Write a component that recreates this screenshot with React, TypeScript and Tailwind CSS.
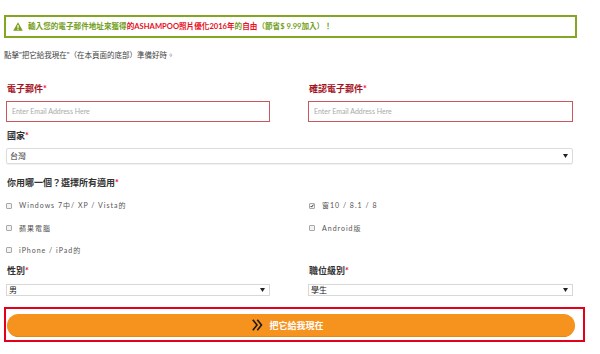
import React from "react";

const font = { fontFamily: 'Lato, "Noto Sans CJK TC", "Noto Sans", sans-serif' };

function Caret() {
  return (
    <svg width="5" height="4" viewBox="0 0 5 4" className="shrink-0">
      <path d="M0 0 L5 0 L2.5 4 Z" fill="#222" />
    </svg>
  );
}

function Box({ checked }: { checked?: boolean }) {
  return (
    <span className="w-[6px] h-[6px] border border-[#a8a8a8] bg-[#f3f3f3] rounded-[1px] flex items-center justify-center shrink-0">
      {checked && (
        <svg width="6" height="6" viewBox="0 0 6 6">
          <path d="M1 3 L2.4 4.6 L5.2 1" stroke="#222" strokeWidth="1.3" fill="none" />
        </svg>
      )}
    </span>
  );
}

function Check({ label, checked, h }: { label: string; checked?: boolean; h: string }) {
  return (
    <div className={`flex items-center gap-[7px] ${h}`}>
      <Box checked={checked} />
      <span className="text-[7px] tracking-[1px] text-[#555] leading-none">{label}</span>
    </div>
  );
}

function Label({ text, red }: { text: string; red?: boolean }) {
  return (
    <div className={`h-[12px] leading-[12px] text-[9px] font-bold pl-[1px] ${red ? "text-[#a3141f]" : "text-[#333]"}`}>
      {text}
      <span className="text-[#e8101e]">*</span>
    </div>
  );
}

export default function App() {
  return (
    <div className="w-[600px] h-[354px] bg-white overflow-hidden" style={font}>
      <div className="pt-[15px] pl-[4px]">
        <div className="w-[573px] h-[23px] border-2 border-[#82a823] flex items-center pl-[7px] gap-[5px]">
          <svg width="10" height="9" viewBox="0 0 10 9">
            <path d="M5 0.3 L9.8 8.7 L0.2 8.7 Z" fill="#7c9f1c" />
            <rect x="4.4" y="3" width="1.2" height="3.2" fill="#fff" />
            <rect x="4.4" y="6.8" width="1.2" height="1.1" fill="#fff" />
          </svg>
          <span className="text-[7.6px] font-bold text-[#73a01b] leading-none whitespace-nowrap">
            輸入您的電子郵件地址來獲得
            <span className="text-[#e8101e]">的ASHAMPOO照片優化2016年</span>
            的<span className="text-[#e8101e]">自由</span>（節省$ 9.99加入）！
          </span>
        </div>
      </div>

      <div className="pl-[6px] w-[573px]">
        <div className="mt-[13px] h-[10px] leading-[10px] text-[7.5px] text-[#444] -ml-[2px]">
          點擊"把它給我現在"（在本頁面的底部）準備好時。
        </div>

        <div className="grid grid-cols-[264px_265px] gap-x-[38px]">
          <div>
            <div className="mt-[22px]">
              <Label text="電子郵件" red />
            </div>
            <div className="mt-[6px] h-[21px] border border-[#c9575b] flex items-center pl-[5px] text-[7px] text-[#a9a9a9]">
              Enter Email Address Here
            </div>
          </div>
          <div>
            <div className="mt-[22px]">
              <Label text="確認電子郵件" red />
            </div>
            <div className="mt-[6px] h-[21px] border border-[#c9575b] flex items-center pl-[5px] text-[7px] text-[#a9a9a9]">
              Enter Email Address Here
            </div>
          </div>
        </div>

        <div className="mt-[8px]">
          <Label text="國家" />
        </div>
        <div className="mt-[6px] w-[567px] h-[16px] border border-[#dcdcdc] rounded-[2px] shadow-[0_1px_1px_rgba(0,0,0,0.06)] flex items-center justify-between pl-[3px] pr-[4px] text-[8px] text-[#333]">
          <span>台灣</span>
          <Caret />
        </div>

        <div className="mt-[13px]">
          <Label text="你用哪一個？選擇所有適用" />
        </div>

        <div className="mt-[5px] grid grid-cols-[264px_265px] gap-x-[38px]">
          <div>
            <Check label="Windows 7中/ XP / Vista的" h="h-[23px]" />
            <Check label="蘋果電腦" h="h-[22px]" />
            <Check label="iPhone / iPad的" h="h-[22px]" />
          </div>
          <div className="pl-[1px]">
            <Check label="窗10 / 8.1 / 8" checked h="h-[23px]" />
            <Check label="Android版" h="h-[22px]" />
          </div>
        </div>

        <div className="mt-[4px] grid grid-cols-[264px_265px] gap-x-[38px]">
          <div>
            <Label text="性別" />
            <div className="mt-[7px] h-[12px] border border-[#d8d8d8] flex items-center justify-between pl-[2px] pr-[4px] text-[8px] text-[#222] leading-none">
              <span>男</span>
              <Caret />
            </div>
          </div>
          <div>
            <Label text="職位級別" />
            <div className="mt-[7px] h-[12px] border border-[#d8d8d8] flex items-center justify-between pl-[2px] pr-[4px] text-[8px] text-[#222] leading-none">
              <span>學生</span>
              <Caret />
            </div>
          </div>
        </div>

        <div className="mt-[11px] -ml-[2px] w-[581px] h-[35px] border-2 border-[#e2001a] pt-[5px] pb-[3px] pl-[1px] pr-[8px]">
          <div className="h-full rounded-full bg-[#f6921e] border-b border-[#ec8510] flex items-center justify-center gap-[6px] pr-[6px]">
            <svg width="11" height="12" viewBox="0 0 11 12">
              <path d="M0.8 0.8 L5 6 L0.8 11.2" stroke="#1a1a1a" strokeWidth="1.6" fill="none" />
              <path d="M5.3 0.8 L9.5 6 L5.3 11.2" stroke="#1a1a1a" strokeWidth="1.6" fill="none" />
            </svg>
            <span className="text-[9px] font-bold text-white leading-none">把它給我現在</span>
          </div>
        </div>
      </div>
    </div>
  );
}
